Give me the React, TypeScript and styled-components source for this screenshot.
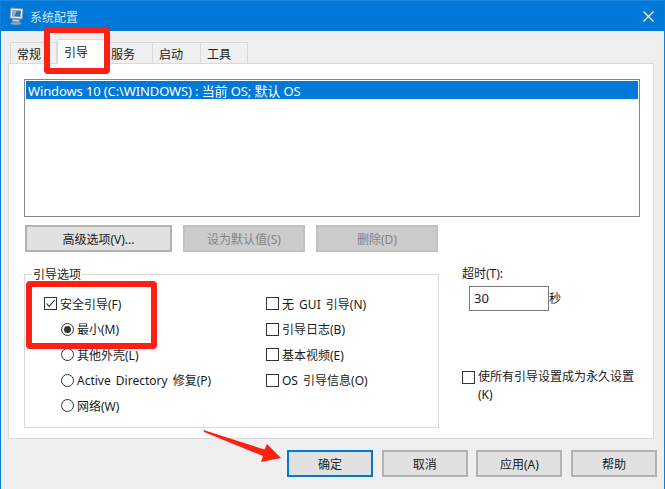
import React from "react";
import styled, { createGlobalStyle } from "styled-components";

const Global = createGlobalStyle`
  html, body { margin: 0; padding: 0; background: #efefef; }
  * { box-sizing: border-box; }
  body { font-family: "Noto Sans", "Noto Sans CJK SC", sans-serif; font-size: 12px; color: #1a1a1a; }
`;

const Window = styled.div`
  position: relative;
  width: 665px;
  height: 489px;
  overflow: hidden;
  display: flex;
  flex-direction: column;
  background: #efefef;
  border-left: 1px solid #0a7fdc;
  border-right: 1px solid #0a7fdc;
`;

const TitleBar = styled.div`
  height: 31px;
  flex: none;
  margin: 0 -1px;
  background: #0078d7;
  border-top: 1px solid #1a86dd;
  display: flex;
  align-items: center;
  padding: 0 11px 0 8px;
  color: #d5e6f6;
`;

const TitleText = styled.span`
  font-family: "Noto Sans CJK SC", sans-serif;
  font-size: 12px;
  margin-left: 6px;
  flex: 1;
`;

const TabStrip = styled.div`
  display: flex;
  align-items: flex-end;
  height: 33px;
  flex: none;
  padding-left: 9px;
  position: relative;
  z-index: 1;
  margin-bottom: -1px;
`;

const Tab = styled.div<{ $w: number; $active?: boolean }>`
  width: ${(p) => p.$w}px;
  height: ${(p) => (p.$active ? 25 : 22)}px;
  display: flex;
  align-items: center;
  padding-left: 6px;
  background: ${(p) => (p.$active ? "#ffffff" : "#f0f0f0")};
  border: 1px solid #d9d9d9;
  border-left-width: ${(p) => (p.$active ? 1 : 0)}px;
  border-bottom: ${(p) => (p.$active ? "1px solid #ffffff" : "1px solid #d9d9d9")};
  font-family: "Noto Sans CJK SC", sans-serif;
  &:first-child { border-left-width: 1px; }
`;

const Panel = styled.div`
  width: 646px;
  height: 376px;
  flex: none;
  margin-left: 7px;
  background: #ffffff;
  border: 1px solid #d9d9d9;
  padding: 15px 13px 0 15px;
  display: flex;
  flex-direction: column;
`;

const ListBox = styled.div`
  height: 138px;
  flex: none;
  border: 1px solid #828790;
  padding: 1px;
`;

const ListRow = styled.div`
  height: 18px;
  line-height: 20px;
  padding-left: 2px;
  background: #0078d7;
  color: #ffffff;
  font-size: 13px;
  letter-spacing: -0.12px;
  white-space: nowrap;
`;

const ButtonRow = styled.div`
  display: flex;
  gap: 11px;
  margin: 8px 0 15px 1px;
`;

const Button = styled.button<{ $w: number; $primary?: boolean }>`
  width: ${(p) => p.$w}px;
  height: 27px;
  padding: 0;
  flex: none;
  background: ${(p) => (p.disabled ? "#cccccc" : "#e1e1e1")};
  border: 2px solid ${(p) => (p.$primary ? "#0078d7" : p.disabled ? "#c2c2c2" : "#b2b2b2")};
  color: ${(p) => (p.disabled ? "#838383" : "#1a1a1a")};
  font: inherit;
  font-size: 12px;
`;

const Lower = styled.div`
  display: flex;
  gap: 23px;
`;

const Group = styled.fieldset`
  width: 415px;
  height: 161px;
  flex: none;
  margin: 0;
  padding: 10px 0 0 19px;
  border: 1px solid #d9d9d9;
  display: grid;
  grid-template-columns: 222px 1fr;
  grid-template-rows: repeat(5, 25.5px);
`;

const Legend = styled.legend`
  margin-left: -12px;
  padding: 0 1px;
  height: 14px;
  line-height: 16px;
  font-size: 12px;
`;

const OptionColumn = styled.div`
  display: contents;
`;

const Option = styled.label<{ $indent?: boolean; $col: number; $row: number }>`
  grid-column: ${(p) => p.$col};
  grid-row: ${(p) => p.$row};
  display: flex;
  align-items: center;
  gap: 3px;
  padding-left: ${(p) => (p.$indent ? 17 : 0)}px;
  white-space: nowrap;
  word-spacing: 2px;
`;

const Box = styled.span`
  width: 13px;
  height: 13px;
  flex: none;
  border: 1px solid #333333;
  background: #ffffff;
  display: inline-flex;
`;

const Radio = styled.span<{ $checked?: boolean }>`
  width: 13px;
  height: 13px;
  flex: none;
  border-radius: 50%;
  border: 1px solid #333333;
  background: #ffffff;
  display: inline-flex;
  align-items: center;
  justify-content: center;
  &::after {
    content: "";
    width: 7px;
    height: 7px;
    border-radius: 50%;
    background: ${(p) => (p.$checked ? "#333333" : "transparent")};
  }
`;

const Side = styled.div`
  flex: 1;
  display: flex;
  flex-direction: column;
`;

const SideLabel = styled.div`
  height: 14px;
  line-height: 14px;
`;

const TimeoutRow = styled.div`
  display: flex;
  margin: 5px 0 0 7px;
`;

const Input = styled.div`
  width: 80px;
  height: 25px;
  border: 1px solid #7a7a7a;
  padding: 2px 0 0 4px;
  font-size: 13px;
  line-height: 18px;
`;

const Suffix = styled.span`
  line-height: 25px;
`;

const PermanentRow = styled.label`
  display: flex;
  align-items: flex-start;
  gap: 3px;
  margin-top: 60px;
`;

const PermanentText = styled.span`
  width: 160px;
  line-height: 18px;
  margin-top: -3px;
`;

const Footer = styled.div`
  display: flex;
  justify-content: flex-end;
  gap: 8.67px;
  margin-top: 11px;
  padding-right: 7px;
`;

const CloseButton = styled.span`
  display: inline-flex;
`;

const Annotation = styled.div<{ $x: number; $y: number; $w: number; $h: number }>`
  position: absolute;
  left: ${(p) => p.$x - 1}px;
  top: ${(p) => p.$y}px;
  width: ${(p) => p.$w}px;
  height: ${(p) => p.$h}px;
  border: 6px solid #ff1f13;
  border-radius: 4px;
  z-index: 3;
  pointer-events: none;
`;

const ArrowLayer = styled.svg`
  position: absolute;
  left: -1px;
  top: 0;
  z-index: 3;
  pointer-events: none;
`;

const Check = () => (
  <svg width="11" height="11" viewBox="0 0 11 11">
    <path d="M1.5 5.5 L4.2 8.4 L9.6 2" fill="none" stroke="#333" strokeWidth="1.1" />
  </svg>
);

const AppIcon = () => (
  <svg width="16" height="18" viewBox="0 0 16 18">
    <path d="M3 1 L15 2 L14 12 L2 11 Z" fill="#e8eef5" stroke="#8b98a8" />
    <path d="M4.5 3 L13 3.8 L12.4 10 L4 9.2 Z" fill="#3f6fa8" />
    <path d="M4.5 3 L9 3.4 L6 9.4 L4 9.2 Z" fill="#8db3dc" />
    <path d="M5 12 L11 12.6 L11.5 15 L4 14.6 Z" fill="#c4ccd6" stroke="#7d8896" strokeWidth="0.6" />
    <ellipse cx="8" cy="16.5" rx="5.5" ry="1.3" fill="#9aa3ad" />
  </svg>
);

const Close = () => (
  <svg width="11" height="11" viewBox="0 0 11 11">
    <path d="M0.5 0.5 L10.5 10.5 M10.5 0.5 L0.5 10.5" stroke="#ffffff" strokeWidth="1.1" />
  </svg>
);

const tabs = [
  { label: "常规", w: 47 },
  { label: "引导", w: 48, active: true },
  { label: "服务", w: 48 },
  { label: "启动", w: 48 },
  { label: "工具", w: 47 },
];

const leftOptions = ["最小(M)", "其他外壳(L)", "Active Directory 修复(P)", "网络(W)"];
const rightOptions = ["无 GUI 引导(N)", "引导日志(B)", "基本视频(E)", "OS 引导信息(O)"];

export default function App() {
  return (
    <Window>
      <Global />
      <TitleBar>
        <AppIcon />
        <TitleText>系统配置</TitleText>
        <CloseButton>
          <Close />
        </CloseButton>
      </TitleBar>
      <TabStrip>
        {tabs.map((t) => (
          <Tab key={t.label} $w={t.w} $active={t.active}>
            {t.label}
          </Tab>
        ))}
      </TabStrip>
      <Panel>
        <ListBox>
          <ListRow>Windows 10 (C:\WINDOWS) : 当前 OS; 默认 OS</ListRow>
        </ListBox>
        <ButtonRow>
          <Button $w={147}>高级选项(V)...</Button>
          <Button $w={122} disabled>设为默认值(S)</Button>
          <Button $w={122} disabled>删除(D)</Button>
        </ButtonRow>
        <Lower>
          <Group>
            <Legend>引导选项</Legend>
            <OptionColumn>
              <Option $col={1} $row={1}>
                <Box><Check /></Box>安全引导(F)
              </Option>
              {leftOptions.map((o, i) => (
                <Option key={o} $col={1} $row={i + 2} $indent>
                  <Radio $checked={i === 0} />
                  {o}
                </Option>
              ))}
            </OptionColumn>
            <OptionColumn>
              {rightOptions.map((o, i) => (
                <Option key={o} $col={2} $row={i + 1}>
                  <Box />
                  {o}
                </Option>
              ))}
            </OptionColumn>
          </Group>
          <Side>
            <SideLabel>超时(T):</SideLabel>
            <TimeoutRow>
              <Input>30</Input>
              <Suffix>秒</Suffix>
            </TimeoutRow>
            <PermanentRow>
              <Box />
              <PermanentText>使所有引导设置成为永久设置(K)</PermanentText>
            </PermanentRow>
          </Side>
        </Lower>
      </Panel>
      <Footer>
        <Button $w={86} $primary>确定</Button>
        <Button $w={86}>取消</Button>
        <Button $w={86}>应用(A)</Button>
        <Button $w={86}>帮助</Button>
      </Footer>
      <Annotation $x={44} $y={27} $w={66} $h={47} />
      <Annotation $x={26} $y={281} $w={131} $h={68} />
      <ArrowLayer width="665" height="489" viewBox="0 0 665 489">
        <path d="M203.5 430 L264.5 449.5 L267 444 L281 458 L261 462 L263 456 L204 432 Z" fill="#ff1f13" />
      </ArrowLayer>
    </Window>
  );
}
